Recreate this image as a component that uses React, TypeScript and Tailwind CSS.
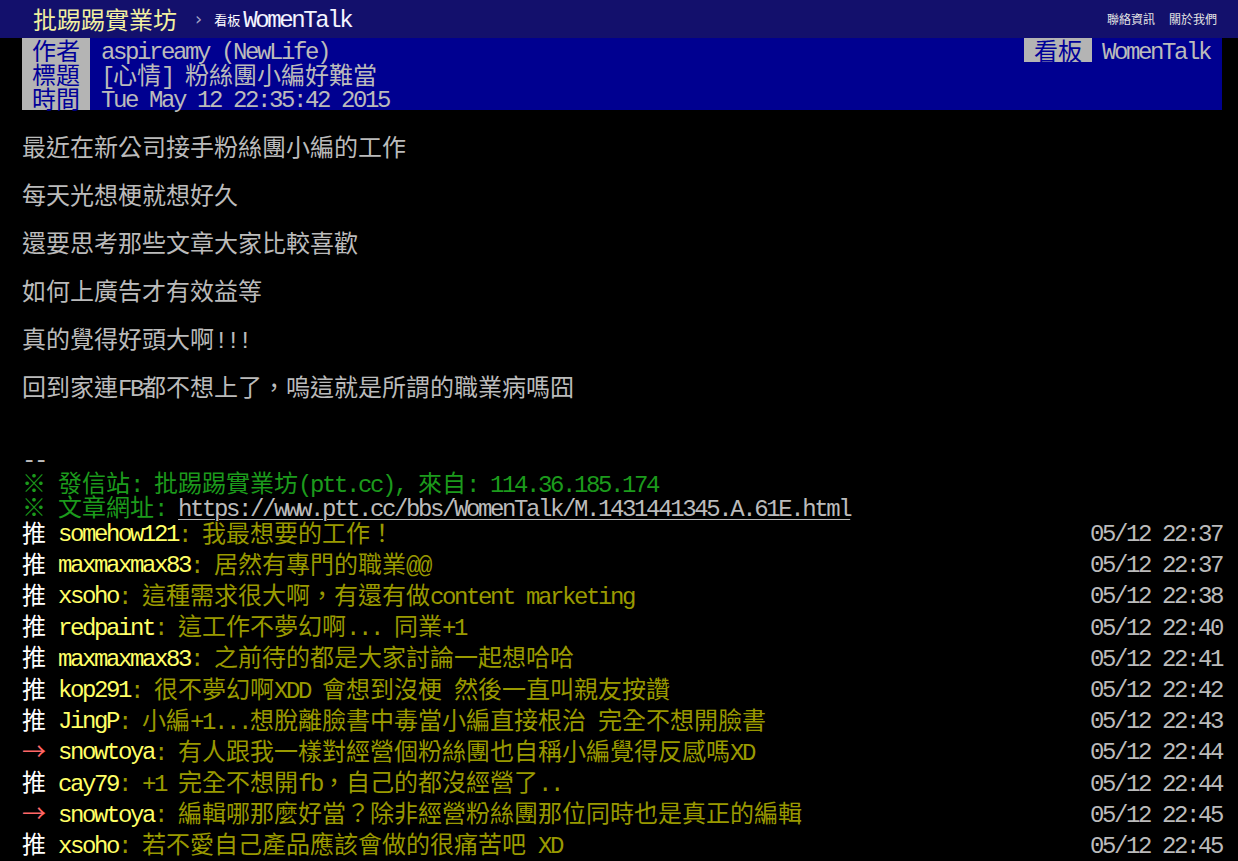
import type { ReactNode } from "react";

// ascii runs get the mono face squeezed to half-width, everything else the CJK face
function T({ s, cls = "" }: { s: string; cls?: string }) {
  const runs = s.match(/[\x00-\x7f]+|[^\x00-\x7f]+/g) ?? [];
  return (
    <>
      {runs.map((r, i) =>
        /^[\x00-\x7f]/.test(r) ? (
          <span
            key={i}
            className={`inline-block h-[24px] [font-family:'Liberation_Mono','Courier_New',monospace] tracking-[-2.4px] ${cls}`}
          >
            {r}
          </span>
        ) : (
          <span key={i} className={`inline-block h-[24px] [font-family:'Noto_Sans_CJK_TC',sans-serif] ${cls}`}>
            {r}
          </span>
        )
      )}
    </>
  );
}

const bodyLines = [
  "",
  "最近在新公司接手粉絲團小編的工作",
  "",
  "每天光想梗就想好久",
  "",
  "還要思考那些文章大家比較喜歡",
  "",
  "如何上廣告才有效益等",
  "",
  "真的覺得好頭大啊!!!",
  "",
  "回到家連FB都不想上了，嗚這就是所謂的職業病嗎囧",
  "",
  "",
  "--",
];

type Push = { tag: "推" | "→"; user: string; text: string; time: string };

const pushes: Push[] = [
  { tag: "推", user: "somehow121", text: "我最想要的工作！", time: "05/12 22:37" },
  { tag: "推", user: "maxmaxmax83", text: "居然有專門的職業@@", time: "05/12 22:37" },
  { tag: "推", user: "xsoho", text: "這種需求很大啊，有還有做content marketing", time: "05/12 22:38" },
  { tag: "推", user: "redpaint", text: "這工作不夢幻啊... 同業+1", time: "05/12 22:40" },
  { tag: "推", user: "maxmaxmax83", text: "之前待的都是大家討論一起想哈哈", time: "05/12 22:41" },
  { tag: "推", user: "kop291", text: "很不夢幻啊XDD 會想到沒梗 然後一直叫親友按讚", time: "05/12 22:42" },
  { tag: "推", user: "JingP", text: "小編+1...想脫離臉書中毒當小編直接根治 完全不想開臉書", time: "05/12 22:43" },
  { tag: "→", user: "snowtoya", text: "有人跟我一樣對經營個粉絲團也自稱小編覺得反感嗎XD", time: "05/12 22:44" },
  { tag: "推", user: "cay79", text: "+1 完全不想開fb，自己的都沒經營了..", time: "05/12 22:44" },
  { tag: "→", user: "snowtoya", text: "編輯哪那麼好當？除非經營粉絲團那位同時也是真正的編輯", time: "05/12 22:45" },
  { tag: "推", user: "xsoho", text: "若不愛自己產品應該會做的很痛苦吧 XD", time: "05/12 22:45" },
];

function MetaTag({ children }: { children: ReactNode }) {
  return <span className="bg-[#b4b4b4] px-[10px] text-[#000098]">{children}</span>;
}

export default function App() {
  return (
    <div className="min-h-screen bg-black text-[24px] leading-[24px] text-[#bbbbbb]">
      {/* top bar */}
      <div className="flex h-[38px] items-center bg-[#13106c] pl-[33px] pr-[21px]">
        <span className="text-[#f2f0a0]">
          <T s="批踢踢實業坊" />
        </span>
        <span className="ml-[18px] [font-family:'DejaVu_Sans',sans-serif] text-[18px] leading-none text-[#a4a4c4]">›</span>
        <span className="ml-[12px] [font-family:'Noto_Sans_CJK_TC',sans-serif] text-[13px] leading-none text-white">看板</span>
        <span className="ml-[3px] text-[#f4f4ff]">
          <T s="WomenTalk" />
        </span>
        <div className="ml-auto flex gap-[14px] [font-family:'Noto_Sans_CJK_TC',sans-serif] text-[12px] leading-none text-[#e4e4e4]">
          <span>聯絡資訊</span>
          <span>關於我們</span>
        </div>
      </div>

      <div className="ml-[22px] w-[1200px]">
        {/* meta */}
        <div className="whitespace-pre">
          <div className="flex h-[24px] bg-[#000090]">
            <MetaTag>
              <T s="作者" />
            </MetaTag>
            <span className="flex-1 pl-[11px]">
              <T s="aspireamy (NewLife)" />
            </span>
            <MetaTag>
              <T s="看板" />
            </MetaTag>
            <span className="pl-[10px] pr-[12px]">
              <T s="WomenTalk" />
            </span>
          </div>
          <div className="flex h-[24px] bg-[#000090]">
            <MetaTag>
              <T s="標題" />
            </MetaTag>
            <span className="pl-[11px]">
              <T s="[心情] 粉絲團小編好難當" />
            </span>
          </div>
          <div className="flex h-[24px] bg-[#000090]">
            <MetaTag>
              <T s="時間" />
            </MetaTag>
            <span className="pl-[11px]">
              <T s="Tue May 12 22:35:42 2015" />
            </span>
          </div>
        </div>

        {/* body */}
        <div className="whitespace-pre">
          {bodyLines.map((l, i) => (
            <div key={i} className="h-[24px]">
              <T s={l} />
            </div>
          ))}
          <div className="h-[24px] text-[#1c9a1c]">
            <T s="※ 發信站: 批踢踢實業坊(ptt.cc), 來自: 114.36.185.174" />
          </div>
          <div className="h-[24px]">
            <span className="text-[#1c9a1c]">
              <T s="※ 文章網址: " />
            </span>
            <span className="text-[#bbbbbb]">
              <T
                s="https://www.ptt.cc/bbs/WomenTalk/M.1431441345.A.61E.html"
                cls="underline decoration-1 underline-offset-[3px]"
              />
            </span>
          </div>
        </div>

        {/* pushes */}
        <div className="whitespace-pre">
          {pushes.map((p, i) => (
            <div key={i} className="flex h-[31.2px] items-center">
              <span className={p.tag === "推" ? "text-white" : "text-[#ff6666]"}>
                <T s={p.tag + " "} />
              </span>
              <span className="text-[#ffff66]">
                <T s={p.user} />
              </span>
              <span className="text-[#999900]">
                <T s={": " + p.text} />
              </span>
              <span className="ml-auto text-[#bbbbbb]">
                <T s={p.time} />
              </span>
            </div>
          ))}
        </div>
      </div>
    </div>
  );
}
